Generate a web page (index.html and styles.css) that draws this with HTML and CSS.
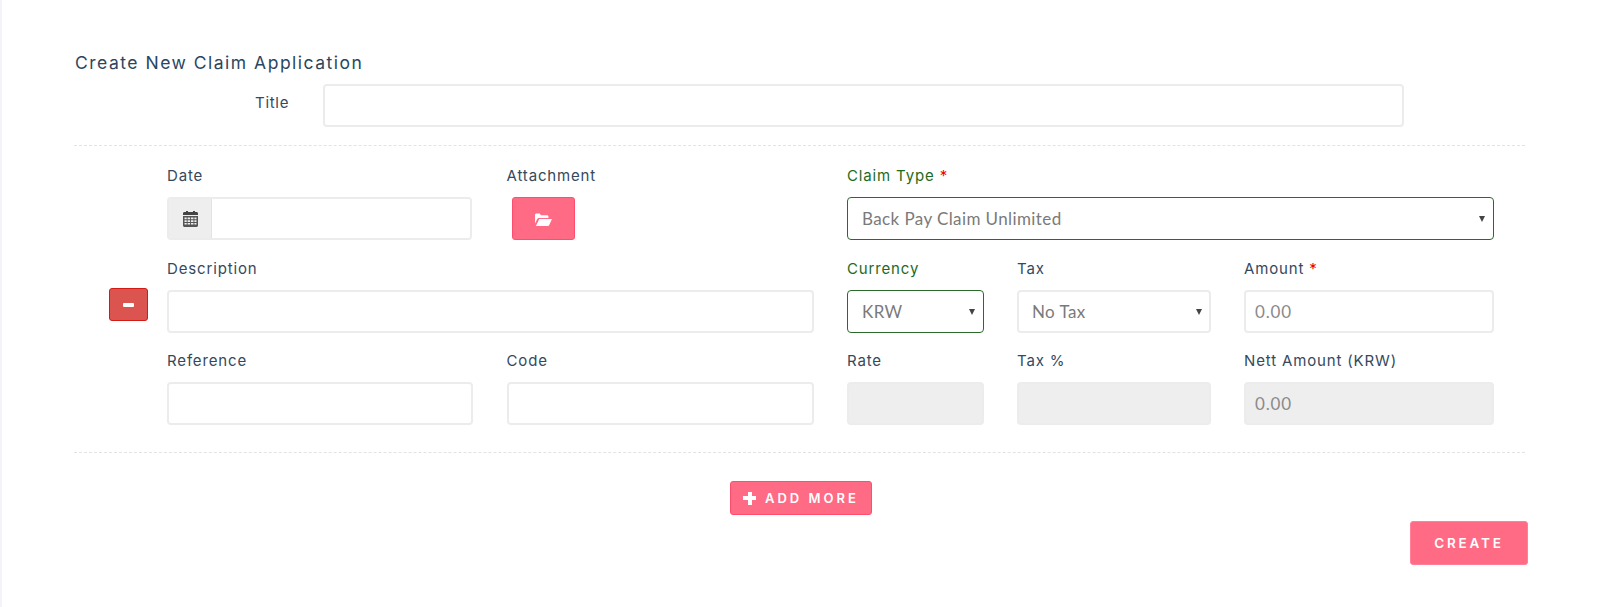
FILE: index.html
```html
<!DOCTYPE html>
<html lang="en">
<head>
<meta charset="utf-8">
<title>Create New Claim Application</title>
<link rel="stylesheet" href="styles.css">
</head>
<body>
<main class="page">
  <h1 class="heading">Create New Claim Application</h1>
  <div class="title-row">
    <label class="title-label">Title</label>
    <input class="control title-input" type="text">
  </div>
  <section class="claim">
    <div class="field date">
      <label class="label">Date</label>
      <div class="date-group">
        <span class="addon">
          <svg class="cal" viewBox="0 0 15 17" width="15" height="17" aria-hidden="true">
            <path fill="#444" d="M0 3.500C0 2.700.6 2 1.400 2H3V1h2v1h5V1h2v1h1.600c.8 0 1.400.7 1.400 1.500V5H0z"/>
            <path fill="#555" fill-rule="evenodd" d="M0 6h15v9.600c0 .8-.6 1.400-1.400 1.400H1.400C.6 17 0 16.400 0 15.600zM1.500 7.500v1.700h2.200V7.500zM4.600 7.500v1.700h2.500V7.500zM8 7.500v1.700h2.500V7.500zM11.400 7.500v1.700h2.100V7.500zM1.500 10.200v1.700h2.200v-1.700zM4.600 10.200v1.700h2.500v-1.700zM8 10.200v1.700h2.500v-1.700zM11.400 10.200v1.700h2.100v-1.700zM1.500 12.900v1.700h2.200v-1.700zM4.600 12.900v1.700h2.500v-1.700zM8 12.900v1.700h2.500v-1.700zM11.400 12.900v1.700h2.100v-1.700z"/>
          </svg>
        </span>
        <input class="date-input" type="text">
      </div>
    </div>
    <div class="field attachment">
      <label class="label">Attachment</label>
      <button class="btn btn-attach" type="button" aria-label="Attach file">
        <svg viewBox="0 0 17 13" width="17" height="13" aria-hidden="true">
          <path fill="#fff" d="M0 2c0-.8.6-1.400 1.400-1.400h3.200L6 2.200h6c.8 0 1.400.6 1.400 1.300V5H4.200C3.300 5 2.500 5.500 2.100 6.300L0 10.500z"/>
          <path fill="#fff" d="M4.300 6H17l-2.900 6.200c-.2.500-.7.800-1.200.8H.9z"/>
        </svg>
      </button>
    </div>
    <div class="field claim-type">
      <label class="label ok">Claim Type <span class="req">*</span></label>
      <div class="select-wrap">
        <select class="control select valid"><option>Back Pay Claim Unlimited</option></select>
      </div>
    </div>

    <button class="btn btn-remove" type="button" aria-label="Remove row"><span class="minus"></span></button>
    <div class="field description">
      <label class="label">Description</label>
      <input class="control" type="text">
    </div>
    <div class="field currency">
      <label class="label ok">Currency</label>
      <div class="select-wrap">
        <select class="control select valid"><option>KRW</option></select>
      </div>
    </div>
    <div class="field tax">
      <label class="label">Tax</label>
      <div class="select-wrap">
        <select class="control select"><option>No Tax</option></select>
      </div>
    </div>
    <div class="field amount">
      <label class="label">Amount <span class="req">*</span></label>
      <input class="control money" type="text" placeholder="0.00">
    </div>

    <div class="field reference">
      <label class="label">Reference</label>
      <input class="control" type="text">
    </div>
    <div class="field code">
      <label class="label">Code</label>
      <input class="control" type="text">
    </div>
    <div class="field rate">
      <label class="label">Rate</label>
      <input class="control" type="text" disabled>
    </div>
    <div class="field taxpct">
      <label class="label">Tax %</label>
      <input class="control" type="text" disabled>
    </div>
    <div class="field nett">
      <label class="label">Nett Amount (KRW)</label>
      <input class="control money" type="text" placeholder="0.00" disabled>
    </div>
  </section>
  <div class="add-row">
    <button class="btn btn-add" type="button"><span class="plus"></span>ADD MORE</button>
  </div>
  <div class="submit-row">
    <button class="btn btn-create" type="submit">CREATE</button>
  </div>
</main>
</body>
</html>
```

FILE: styles.css
```css
* { box-sizing: border-box; }
html, body { margin: 0; height: 100%; background: #fff; }
body {
  font-family: "Inter", "Liberation Sans", sans-serif;
  color: #34495e;
  overflow: hidden;
}
.page {
  height: 607px;
  border-left: 2px solid #f3f3f8;
  padding: 52px 75px 0 72px;
}
.heading {
  margin: 0 0 0 1px;
  font-size: 17.500px;
  line-height: 22px;
  font-weight: 400;
  letter-spacing: 1.500px;
  color: #2a4660;
}
.title-row {
  display: flex;
  align-items: flex-start;
  margin-top: 10px;
  padding-bottom: 18px;
}
.title-label {
  width: 249px;
  flex: none;
  padding: 10px 0 0 181px;
  font-size: 15px;
  line-height: 18px;
  letter-spacing: .7px;
}
.control {
  display: block;
  width: 100%;
  height: 43px;
  border: 2px solid #ececec;
  border-radius: 4px;
  background: #fff;
  padding: 0 13px;
  font: 400 17px "Lato", "Liberation Sans", sans-serif;
  letter-spacing: .4px;
  color: #7a7a7a;
  outline: none;
}
.title-input { width: 1081px; flex: none; }
.control:disabled { background: #eee; }
.control::placeholder { color: #8a8a8a; opacity: 1; }
.money { padding-left: 9px; letter-spacing: .8px; }
.claim {
  display: grid;
  grid-template-columns: 24.5px 306px 307px 136.5px 193.5px 250px;
  column-gap: 33.5px;
  grid-template-rows: 93px 92px 92px;
  border-top: 1px dashed #e3e3e3;
  border-bottom: 1px dashed #e3e3e3;
  padding: 17px 31px 0 35px;
  height: 308px;
}
.field { min-width: 0; }
.label {
  display: block;
  height: 34px;
  padding-top: 3.500px;
  font-size: 15px;
  line-height: 18px;
  letter-spacing: .85px;
  color: #34495e;
}
.label.ok { color: #1e6b1e; }
.req { color: #e00; }
.date { grid-column: 2; grid-row: 1; }
.attachment { grid-column: 3; grid-row: 1; }
.claim-type { grid-column: 4 / 7; grid-row: 1; }
.description { grid-column: 2 / 4; grid-row: 2; }
.currency { grid-column: 4; grid-row: 2; }
.tax { grid-column: 5; grid-row: 2; }
.amount { grid-column: 6; grid-row: 2; }
.reference { grid-column: 2; grid-row: 3; }
.code { grid-column: 3; grid-row: 3; }
.rate { grid-column: 4; grid-row: 3; }
.taxpct { grid-column: 5; grid-row: 3; }
.nett { grid-column: 6; grid-row: 3; }
.date-group {
  display: flex;
  height: 43px;
  width: 305px;
  border: 2px solid #ececec;
  border-radius: 4px;
  overflow: hidden;
}
.addon {
  flex: none;
  width: 43px;
  display: flex;
  align-items: center;
  justify-content: center;
  background: #eee;
  border-right: 1px solid #e3e3e3;
}
.date-input { flex: 1; min-width: 0; border: 0; outline: none; }
.select-wrap { position: relative; }
.select-wrap::after {
  content: "";
  position: absolute;
  right: 9px;
  top: 19px;
  border-left: 3px solid transparent;
  border-right: 3px solid transparent;
  border-top: 6px solid #444;
  pointer-events: none;
}
.select { appearance: none; -webkit-appearance: none; }
.select.valid { border: 1px solid #2b6a2b; padding-left: 14px; }
.btn {
  display: block;
  border: 1px solid #ff4d6d;
  border-radius: 3px;
  background: #ff6b85;
  color: #fff;
  font-family: "Inter", "Liberation Sans", sans-serif;
  font-weight: 600;
  padding: 0;
}
.btn-attach {
  width: 63px;
  height: 43px;
  margin-left: 5px;
  padding-top: 2px;
  line-height: 0;
}
.btn-remove {
  grid-column: 1;
  grid-row: 2;
  align-self: start;
  justify-self: start;
  width: 39px;
  height: 33px;
  margin-top: 32px;
  background: #dc5450;
  border-color: #d01c14;
  display: flex;
  align-items: center;
  justify-content: center;
}
.minus { display: block; width: 11px; height: 4px; background: #fff; border-radius: 1px; }
.add-row { display: flex; justify-content: center; padding: 28px 0 0 3px; }
.btn-add {
  width: 142px;
  height: 34px;
  display: flex;
  align-items: center;
  padding-left: 12px;
  font-size: 13px;
  letter-spacing: 3px;
}
.plus {
  flex: none;
  width: 13px;
  height: 13px;
  margin-right: 9px;
  background:
    linear-gradient(#fff, #fff) center / 13px 4px no-repeat,
    linear-gradient(#fff, #fff) center / 4px 13px no-repeat;
}
.submit-row { display: flex; justify-content: flex-end; margin-top: 6px; margin-right: -3px; }
.btn-create {
  width: 118px;
  height: 44px;
  border-color: #ff8098;
  font-size: 13.500px;
  letter-spacing: 2.800px;
}
```
